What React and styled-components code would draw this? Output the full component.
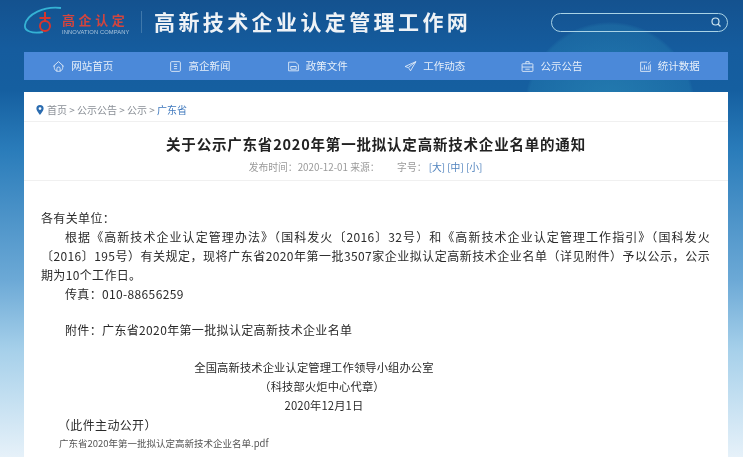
import React from "react";
import styled, { createGlobalStyle } from "styled-components";

const Global = createGlobalStyle`
  html, body { margin: 0; padding: 0; background: #fff; }
  body { width: 743px; height: 469px; overflow: hidden; font-family: "Noto Sans CJK SC", "Liberation Sans", sans-serif; }
`;
const Page = styled.div`
  width: 743px; height: 469px; background: #fff; overflow: hidden; filter: blur(0.4px);
`;
const Backdrop = styled.div`
  position: relative; height: 457px; padding: 0 15px 0 24px; box-sizing: border-box; overflow: hidden;
  display: flex; flex-direction: column;
  background: linear-gradient(180deg, #14528f 0px, #155c9e 50px, #155fa0 90px, #2a7cba 150px, #6ca9d6 280px, #a6d0ea 350px, #e6f1f9 457px);
`;
const Globe = styled.div`
  position: absolute; left: 525px; top: 22px; width: 170px; height: 170px; border-radius: 50%;
  background: radial-gradient(circle at 50% 50%, rgba(50,150,190,.5), rgba(40,135,180,.3) 68%, rgba(40,120,170,0) 71%);
`;
const Header = styled.header`
  position: relative; height: 52px; display: flex; align-items: center; padding-bottom: 8px; box-sizing: border-box; flex: none;
`;
const Brand = styled.div`
  position: relative; width: 117px; height: 34px; flex: none;
`;
const BrandName = styled.div`
  position: absolute; left: 38px; top: 7px; font: 700 13px/16px "Noto Sans CJK SC", sans-serif; color: #d2453f; letter-spacing: 3.6px; white-space: nowrap;
`;
const BrandSub = styled.div`
  position: absolute; left: 38px; top: 24px; font: 5.8px/6px "Liberation Sans", sans-serif; color: #a9c4dc; white-space: nowrap; letter-spacing: .1px;
`;
const Divider = styled.div`
  width: 1px; height: 22px; background: #3f78ab; margin-right: 12px; flex: none;
`;
const SiteName = styled.h1`
  margin: 0 0 3px; font: 700 21px/26px "Noto Sans CJK SC", serif; color: #eef2f6; letter-spacing: 3.4px; white-space: nowrap;
`;
const Search = styled.div`
  margin-left: auto; width: 177px; height: 19px; box-sizing: border-box; border: 1px solid #a9d3e6; border-radius: 10px;
  display: flex; align-items: center; justify-content: flex-end; padding-right: 5px; color: #cfe6f0; flex: none;
`;
const Nav = styled.nav`
  position: relative; height: 28px; background: #4b89d9; display: grid; grid-template-columns: repeat(6, 1fr); flex: none; width: 704px;
`;
const NavItem = styled.div`
  display: flex; align-items: center; justify-content: center; gap: 6px; color: #e6eff9; font: 10.5px/14px "Noto Sans CJK SC", sans-serif; white-space: nowrap;
  svg { flex: none; }
`;
const Card = styled.main`
  position: relative; margin-top: 12px; width: 704px; flex: 1; background: #fff; padding: 0 18px 0 17px; box-sizing: border-box; color: #222; overflow: hidden;
`;
const Crumbs = styled.div`
  display: flex; align-items: center; height: 29px; padding-top: 6px; box-sizing: border-box; font: 10px/12px "Noto Sans CJK SC", sans-serif; color: #8a8f96; gap: 3px; margin-left: -5px;
  b { font-weight: 400; color: #3f78bd; }
`;
const Head = styled.div`
  margin: 0 -18px 0 -17px; border-top: 1px solid #f0f0f0; border-bottom: 1px solid #f0f0f0; height: 60px; box-sizing: border-box; text-align: center;
`;
const Title = styled.h2`
  margin: 12px 0 0 0; font: 700 14.5px/20px "Noto Sans CJK SC", sans-serif; color: #222; letter-spacing: .8px; white-space: nowrap;
`;
const Meta = styled.div`
  margin: 7px 21px 0 0; font: 9.8px/12px "Noto Sans CJK SC", sans-serif; color: #9a9a9a; white-space: pre;
  span { color: #4f82bd; }
`;
const Body = styled.div`
  padding-top: 27px; font: 12px/19px "Noto Sans CJK SC", sans-serif; color: #2a2a2a; letter-spacing: .35px;
`;
const P = styled.p`
  margin: 0 0 ${p => p.$after || 0}px ${p => p.$indent || 0}px; white-space: nowrap;
`;
const FullLine = styled.p`
  margin: 0 0 0 ${p => p.$indent || 0}px; text-align: justify; text-align-last: justify; white-space: nowrap;
`;
const Centered = styled.p`
  margin: 0 0 0 ${p => 127 + (p.$shift || 0)}px; width: 292px; text-align: center; font-size: 11.3px; letter-spacing: .1px; white-space: nowrap;
`;
const Attachment = styled.div`
  font: 9.5px/14px "Noto Sans CJK SC", sans-serif; color: #555; margin: 2px 0 0 18px; letter-spacing: 0; white-space: nowrap;
`;

const icon = { width: 13, height: 13, viewBox: "0 0 24 24", fill: "none", stroke: "currentColor", strokeWidth: 1.6 };
const Home = () => <svg {...icon}><path d="M2 12l10-9 10 9M5 10c-2 5 0 11 7 11s9-6 7-11M9 21v-5a3 3 0 0 1 6 0v5" /></svg>;
const News = () => <svg {...icon}><rect x="3" y="3" width="18" height="18" rx="2" /><path d="M9 8h6M9 12h6M9 16h6" /></svg>;
const Doc = () => <svg {...icon}><path d="M3 4h13l5 5v11H3z" /><path d="M7 12h10v5H7z" /></svg>;
const Plane = () => <svg {...icon}><path d="M22 3L2 12l6 2 14-11-10 17-3-5" /></svg>;
const Notice = () => <svg {...icon}><rect x="2" y="7" width="20" height="14" rx="1" /><path d="M9 7V3h6v4M2 13h20M8 17h8" /></svg>;
const Stats = () => <svg {...icon}><path d="M15 4H3v17h18V8" /><path d="M6 18v-4M10 18V9M14 18v-6M18 18v-8M17 8l4-5" /></svg>;

const items = [
  [Home, "网站首页"], [News, "高企新闻"], [Doc, "政策文件"],
  [Plane, "工作动态"], [Notice, "公示公告"], [Stats, "统计数据"],
];

export default function App() {
  return (
    <Page>
      <Global />
      <Backdrop>
        <Globe />
        <Header>
          <Brand>
            <svg width="38" height="34" viewBox="0 0 38 34" fill="none">
              <path d="M37 3C20 1 3 9 1 20c-1 6 7 9 18 7" stroke="#35b2d4" strokeWidth="1.8" />
              <circle cx="21" cy="21" r="5" stroke="#d8352d" strokeWidth="2" />
              <path d="M15.500 13h11M21 7v9" stroke="#d8352d" strokeWidth="2" />
            </svg>
            <BrandName>高企认定</BrandName>
            <BrandSub>INNOVATION COMPANY</BrandSub>
          </Brand>
          <Divider />
          <SiteName>高新技术企业认定管理工作网</SiteName>
          <Search>
            <svg width="12" height="12" viewBox="0 0 24 24" fill="none" stroke="currentColor" strokeWidth="2.4"><circle cx="11" cy="11" r="7" /><path d="M16 16l5 5" /></svg>
          </Search>
        </Header>
        <Nav>
          {items.map(([I, t]) => <NavItem key={t}><I />{t}</NavItem>)}
        </Nav>
        <Card>
          <Crumbs>
            <svg width="8" height="10" viewBox="0 0 8 10"><path d="M4 0a3.6 3.6 0 0 0-3.6 3.6C.4 6 4 10 4 10s3.6-4 3.6-6.4A3.6 3.6 0 0 0 4 0zm0 5a1.400 1.400 0 1 1 0-2.800A1.400 1.400 0 0 1 4 5z" fill="#2b6cb0" /></svg>
            <span>首页 &gt; 公示公告 &gt; 公示 &gt; <b>广东省</b></span>
          </Crumbs>
          <Head>
            <Title>关于公示广东省2020年第一批拟认定高新技术企业名单的通知</Title>
            <Meta>发布时间：2020-12-01 来源：        字号： <span>[大] [中] [小]</span></Meta>
          </Head>
          <Body>
            <P>各有关单位：</P>
            <FullLine $indent={24}>根据《高新技术企业认定管理办法》（国科发火〔2016〕32号）和《高新技术企业认定管理工作指引》（国科发火</FullLine>
            <FullLine>〔2016〕195号）有关规定，现将广东省2020年第一批3507家企业拟认定高新技术企业名单（详见附件）予以公示，公示</FullLine>
            <P>期为10个工作日。</P>
            <P $indent={24} $after={17}>传真：010-88656259</P>
            <P $indent={24} $after={19}>附件：广东省2020年第一批拟认定高新技术企业名单</P>
            <Centered>全国高新技术企业认定管理工作领导小组办公室</Centered>
            <Centered $shift={8}>（科技部火炬中心代章）</Centered>
            <Centered $shift={10}>2020年12月1日</Centered>
            <P $indent={17}>（此件主动公开）</P>
            <Attachment>广东省2020年第一批拟认定高新技术企业名单.pdf</Attachment>
          </Body>
        </Card>
      </Backdrop>
    </Page>
  );
}
